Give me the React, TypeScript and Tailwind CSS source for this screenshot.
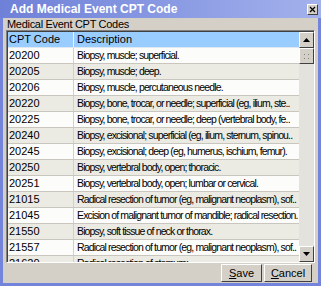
import React from "react";

const rows: [string, string][] = [
  ["20200", "Biopsy, muscle; superficial."],
  ["20205", "Biopsy, muscle; deep."],
  ["20206", "Biopsy, muscle, percutaneous needle."],
  ["20220", "Biopsy, bone, trocar, or needle; superficial (eg, ilium, ste.."],
  ["20225", "Biopsy, bone, trocar, or needle; deep (vertebral body, fe.."],
  ["20240", "Biopsy, excisional; superficial (eg, ilium, sternum, spinou.."],
  ["20245", "Biopsy, excisional; deep (eg, humerus, ischium, femur)."],
  ["20250", "Biopsy, vertebral body, open; thoracic."],
  ["20251", "Biopsy, vertebral body, open; lumbar or cervical."],
  ["21015", "Radical resection of tumor (eg, malignant neoplasm), sof.."],
  ["21045", "Excision of malignant tumor of mandible; radical resection."],
  ["21550", "Biopsy, soft tissue of neck or thorax."],
  ["21557", "Radical resection of tumor (eg, malignant neoplasm), sof.."],
  ["21620", "Radical resection of sternum;"],
];

const raised =
  "bg-[#d4d0c8] border border-t-white border-l-white border-r-[#404040] border-b-[#404040]";

export default function App() {
  return (
    <div
      className="w-[321px] h-[286px] flex flex-col bg-[#7384da] overflow-hidden"
      style={{ fontFamily: '"Liberation Sans", Arial, sans-serif' }}
    >
      {/* Title bar */}
      <div className="h-[18px] flex items-center justify-between pl-[10px] pr-[3px] bg-gradient-to-r from-[#6f80d8] to-[#a3b1ec] shrink-0">
        <span className="text-white font-bold text-[12px] leading-none">Add Medical Event CPT Code</span>
        <div className={`w-[11px] h-[11px] ${raised} flex items-center justify-center`}>
          <svg width="7" height="7" viewBox="0 0 7 7">
            <path d="M1 1L6 6M6 1L1 6" stroke="#000" strokeWidth="1.2" />
          </svg>
        </div>
      </div>
      {/* Body */}
      <div className="h-[265px] mx-[3px] bg-[#d4d0c8] flex flex-col pl-[3px] pr-[3px]">
        <div className="h-[12px] text-[11px] leading-[13px] text-black pl-[1px] tracking-[-0.3px] whitespace-nowrap">
          Medical Event CPT Codes
        </div>
        <div className="h-[233px] border border-t-[#808080] border-l-[#808080] border-r-white border-b-white flex overflow-hidden shrink-0">
          <div className="flex-1 flex flex-col overflow-hidden bg-white border-t border-l border-[#404040]">
            <div className="h-[16px] flex bg-[#99ccff] text-[11px] shrink-0 border-b border-[#dfe8f0]">
              <div className="w-[66px] pl-[1px] leading-[15px] border-r border-[#e8f4ff]">CPT Code</div>
              <div className="flex-1 pl-[3px] leading-[15px]">Description</div>
            </div>
            {rows.map(([c, d], i) => (
              <div
                key={c}
                className={`h-[16px] flex shrink-0 text-[11px] border-b border-[#c8c6bf] ${i % 2 === 0 ? "bg-[#fcfcfa]" : "bg-[#ebeae3]"}`}
              >
                <div className="w-[66px] pl-[1px] leading-[15px] border-r border-[#d4d0c8] whitespace-nowrap overflow-hidden">{c}</div>
                <div className="flex-1 pl-[3px] leading-[15px] whitespace-nowrap overflow-hidden text-[10.5px] tracking-[-0.86px]">{d}</div>
              </div>
            ))}
          </div>
          {/* Scrollbar */}
          <div className="w-[15px] flex flex-col bg-[#e4e2dc] border-t border-[#404040]">
            <div className={`h-[16px] ${raised} flex items-center justify-center`}>
              <svg width="7" height="4" viewBox="0 0 7 4"><path d="M3.5 0L7 4H0Z" fill="#000" /></svg>
            </div>
            <div className={`h-[16px] ${raised} flex items-center justify-center`}>
              <svg width="5" height="5" viewBox="0 0 5 5">
                <rect x="0" y="0" width="1" height="1" fill="#808080" />
                <rect x="4" y="0" width="1" height="1" fill="#808080" />
                <rect x="0" y="4" width="1" height="1" fill="#808080" />
                <rect x="4" y="4" width="1" height="1" fill="#808080" />
              </svg>
            </div>
            <div className="flex-1" />
            <div className={`h-[16px] ${raised} flex items-center justify-center`}>
              <svg width="7" height="4" viewBox="0 0 7 4"><path d="M0 0H7L3.5 4Z" fill="#000" /></svg>
            </div>
          </div>
        </div>
        <div className="flex-1 flex items-start pt-[1px] justify-end gap-[2px] pr-[3px]">
          <button className={`w-[41px] h-[18px] ${raised} text-[11px] leading-none text-black`}>
            <span className="underline">S</span>ave
          </button>
          <button className={`w-[48px] h-[18px] ${raised} text-[11px] leading-none text-black`}>
            <span className="underline">C</span>ancel
          </button>
        </div>
      </div>
    </div>
  );
}
